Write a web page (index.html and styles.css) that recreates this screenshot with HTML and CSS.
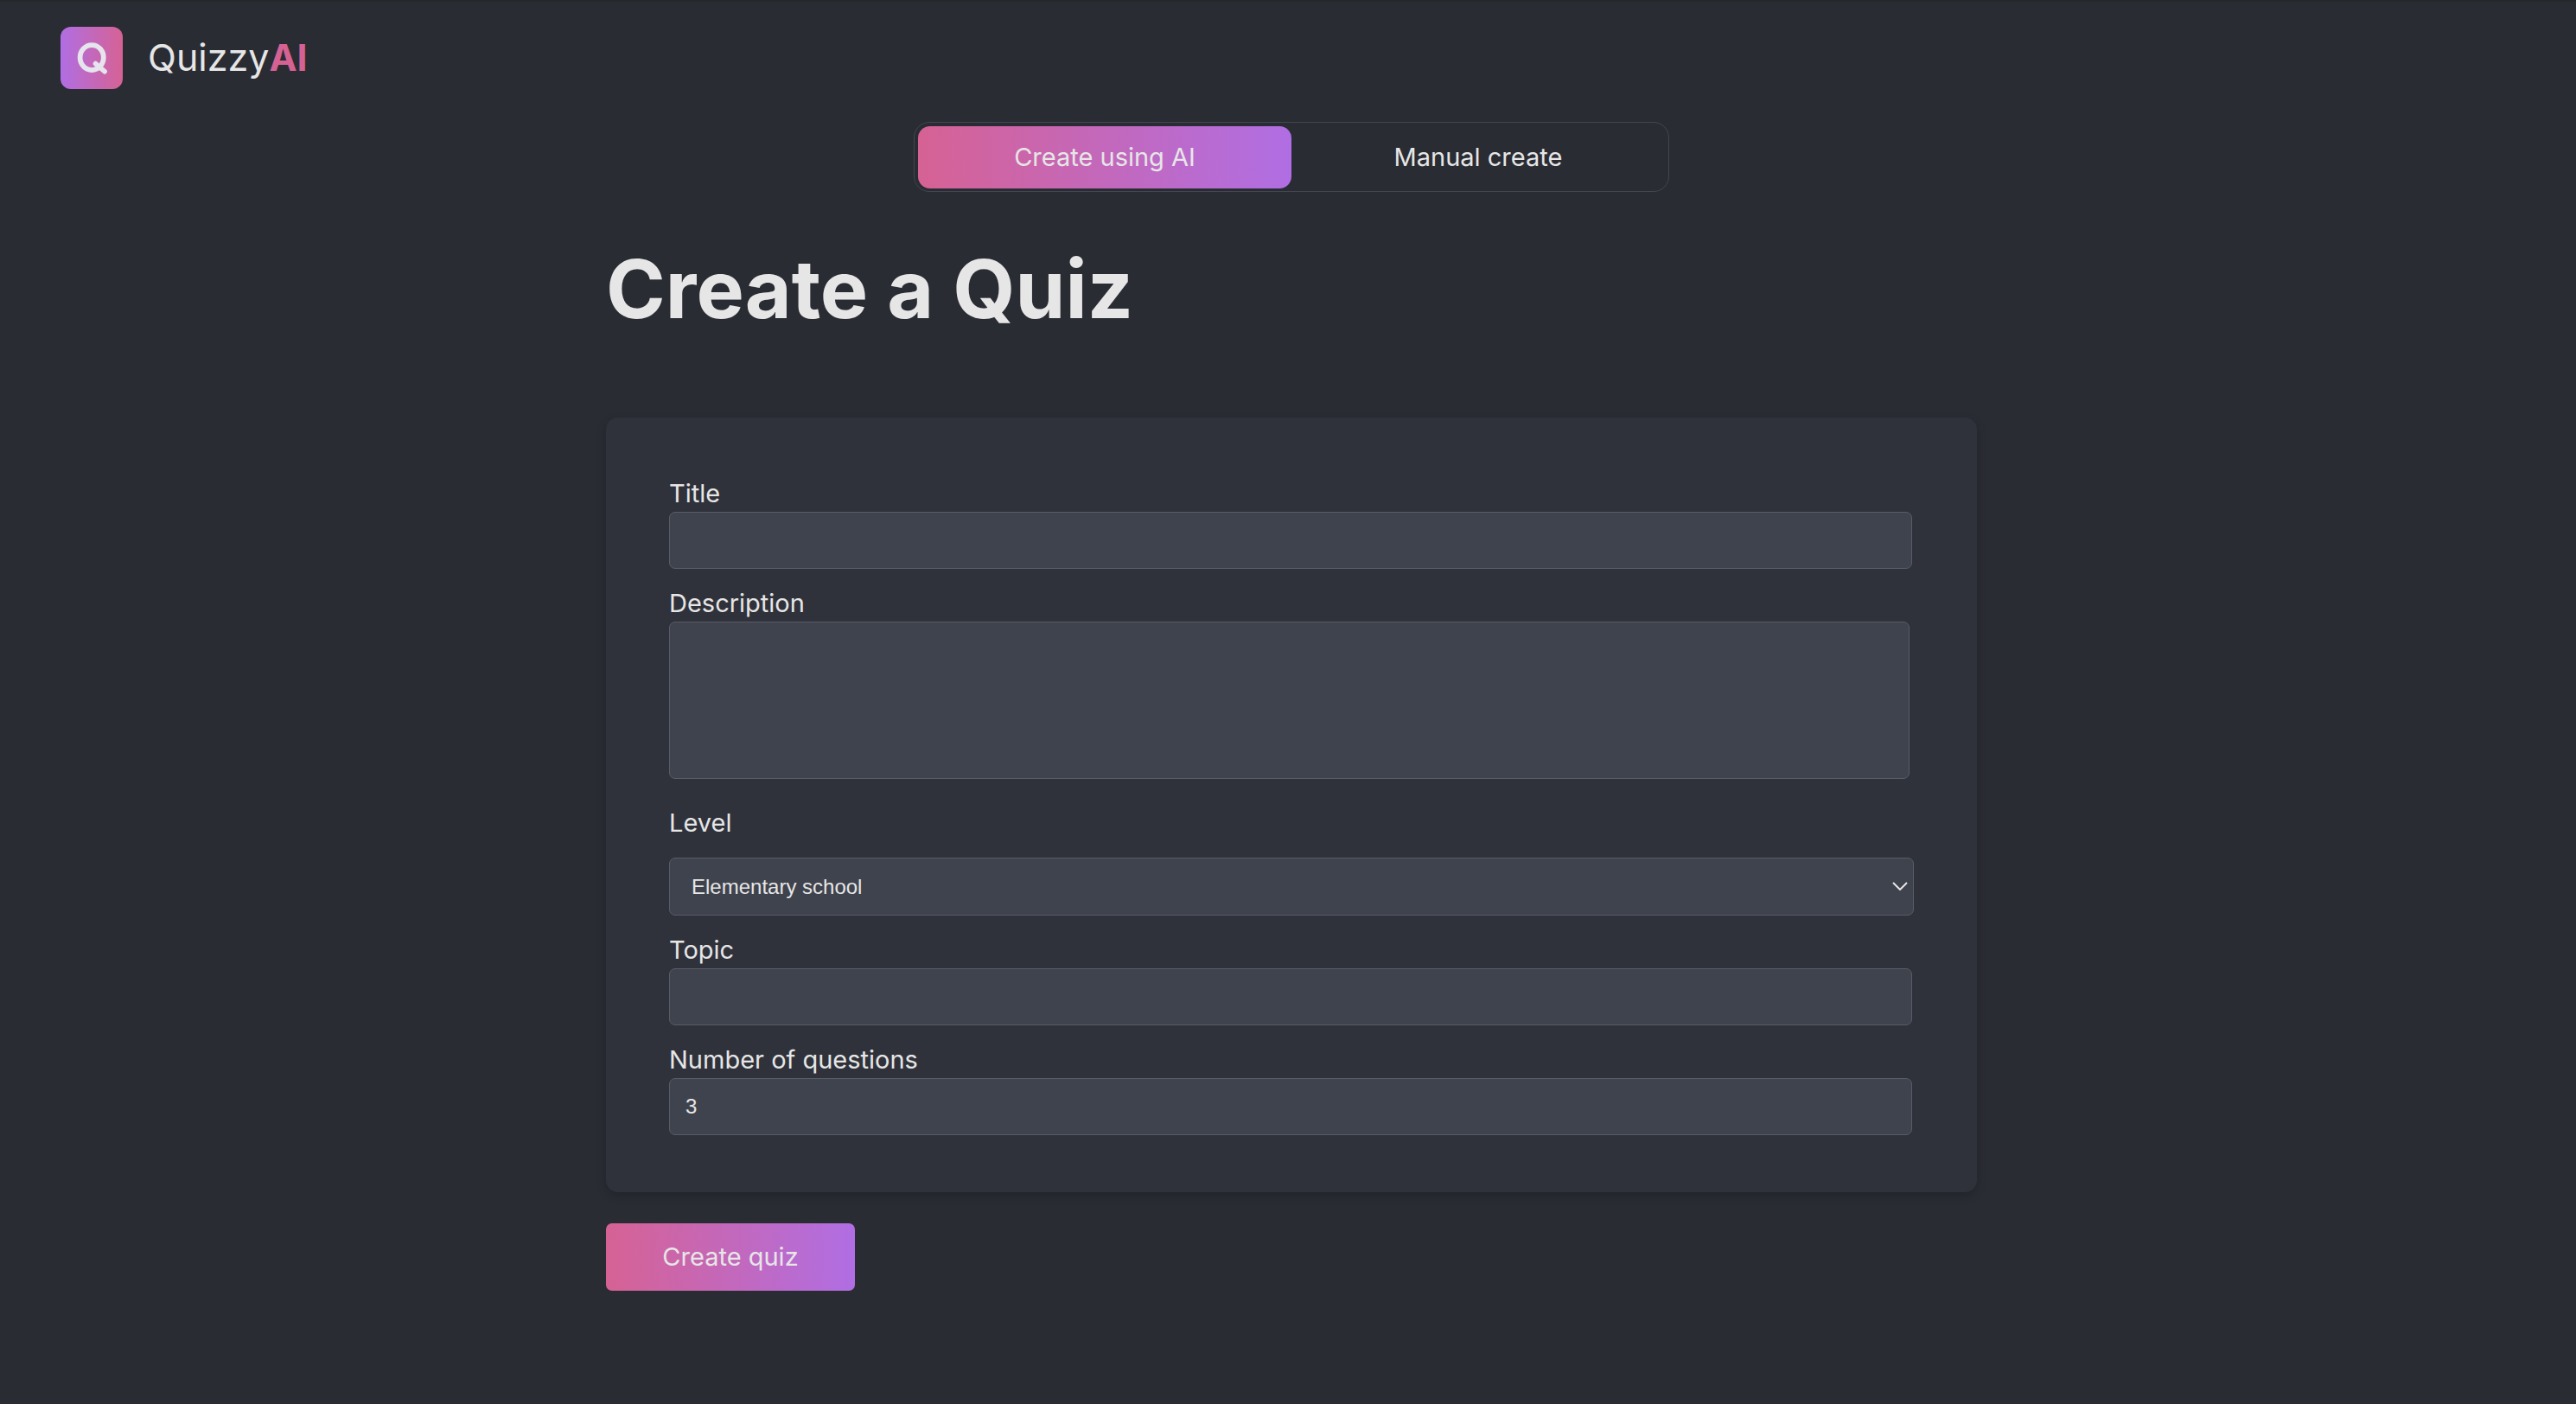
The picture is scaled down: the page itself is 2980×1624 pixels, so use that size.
FILE: index.html
```html
<!DOCTYPE html>
<html lang="en">
<head>
<meta charset="utf-8">
<meta name="viewport" content="width=device-width, initial-scale=1">
<title>QuizzyAI</title>
<link rel="stylesheet" href="styles.css">
</head>
<body>
<header class="header">
  <a class="brand" href="#">
    <svg class="brand-icon" viewBox="0 0 72 72" aria-hidden="true">
      <defs>
        <linearGradient id="brand-gradient">
          <stop offset="0" stop-color="#b06ee3"/>
          <stop offset="1" stop-color="#d66294"/>
        </linearGradient>
      </defs>
      <rect width="72" height="72" rx="12" fill="url(#brand-gradient)"/>
      <g fill="none" stroke="#e6e4ec" stroke-width="5.8" stroke-linecap="round">
        <ellipse cx="36.2" cy="35.6" rx="13.6" ry="14.5"/>
        <path d="M40.6 42.6 51 51.6"/>
      </g>
    </svg>
    <span class="brand-name">Quizzy<strong class="brand-accent">AI</strong></span>
  </a>
</header>
<main class="main">
  <div class="tabs" role="tablist">
    <button class="tab tab-active" type="button" role="tab" aria-selected="true">Create using AI</button>
    <button class="tab" type="button" role="tab" aria-selected="false">Manual create</button>
  </div>
  <form class="quiz">
    <h1 class="heading">Create a Quiz</h1>
    <div class="card">
      <div class="field">
        <label class="label" for="title">Title</label>
        <input class="control control-input" id="title" type="text">
      </div>
      <div class="field">
        <label class="label" for="description">Description</label>
        <textarea class="control control-area" id="description"></textarea>
      </div>
      <div class="field field-select">
        <label class="label" for="level">Level</label>
        <div class="select">
          <select class="control control-select" id="level">
            <option>Elementary school</option>
            <option>High school</option>
            <option>University</option>
          </select>
          <svg class="chevron" viewBox="0 0 18 10" aria-hidden="true"><path d="M1 1l8 8 8-8"/></svg>
        </div>
      </div>
      <div class="field">
        <label class="label" for="topic">Topic</label>
        <input class="control control-input" id="topic" type="text">
      </div>
      <div class="field">
        <label class="label" for="count">Number of questions</label>
        <input class="control control-input" id="count" type="text" inputmode="numeric" value="3">
      </div>
    </div>
    <button class="submit" type="submit">Create quiz</button>
  </form>
</main>
</body>
</html>
```
FILE: styles.css
```css
* {
  box-sizing: border-box;
}

body {
  margin: 0;
  min-height: 100vh;
  border-top: 2px solid #25282b;
  background: #2a2c34;
  color: #e6e6e6;
  font-family: Inter, "Liberation Sans", sans-serif;
  font-size: 29px;
  line-height: 43px;
}

.header {
  display: flex;
  padding: 29px 70px 38px;
}

.brand {
  display: flex;
  align-items: center;
  gap: 29px;
  color: inherit;
  text-decoration: none;
}

.brand-icon {
  display: block;
  width: 72px;
  height: 72px;
}

.brand-name {
  padding-bottom: 2px;
  font-size: 43px;
  font-weight: 400;
}

.brand-accent {
  color: #d66294;
  font-weight: 700;
}

.main {
  display: flex;
  flex-direction: column;
  align-items: center;
  padding: 0 16px 64px 24px;
}

.tabs {
  display: grid;
  grid-template-columns: 1fr 1fr;
  width: 100%;
  max-width: 874px;
  padding: 4px 4px 3px;
  border: 1px solid #434651;
  border-radius: 18px;
}

.tab {
  height: 72px;
  padding: 0 0 2px;
  border: 0;
  border-radius: 14px;
  background: none;
  color: inherit;
  font: inherit;
}

.tab-active,
.submit {
  background: linear-gradient(90deg, #d66294, #b06ee3);
}

.quiz {
  width: 100%;
  max-width: 1586px;
}

.heading {
  margin: 53px 0 90px;
  font-size: 93px;
  font-weight: 700;
  line-height: 118px;
}

.card {
  display: flex;
  flex-direction: column;
  gap: 18px;
  padding: 66px 73px;
  border-radius: 14px;
  background: #30323b;
  box-shadow: 0 4px 12px rgba(0, 0, 0, 0.2);
}

.field {
  display: flex;
  flex-direction: column;
}

.field-select {
  gap: 19px;
  padding-top: 11px;
}

.control {
  height: 66px;
  padding: 0 18px;
  border: 1px solid #5a5c65;
  border-radius: 7px;
  background: #3f434d;
  color: inherit;
  font-family: "Liberation Sans", Arial, sans-serif;
  font-size: 24px;
}

.control-input {
  margin-right: 2px;
}

.control-area {
  height: 182px;
  margin-right: 5px;
  padding: 18px;
  resize: none;
}

.select {
  position: relative;
}

.control-select {
  display: block;
  width: 100%;
  height: 67px;
  padding: 0 25px;
  appearance: none;
}

.chevron {
  position: absolute;
  top: 28px;
  right: 7px;
  width: 18px;
  height: 10px;
  fill: none;
  stroke: #e6e6e6;
  stroke-width: 2;
  pointer-events: none;
}

.submit {
  width: 288px;
  height: 78px;
  margin-top: 36px;
  padding: 0 0 2px;
  border: 0;
  border-radius: 7px;
  color: inherit;
  font: inherit;
}
```
